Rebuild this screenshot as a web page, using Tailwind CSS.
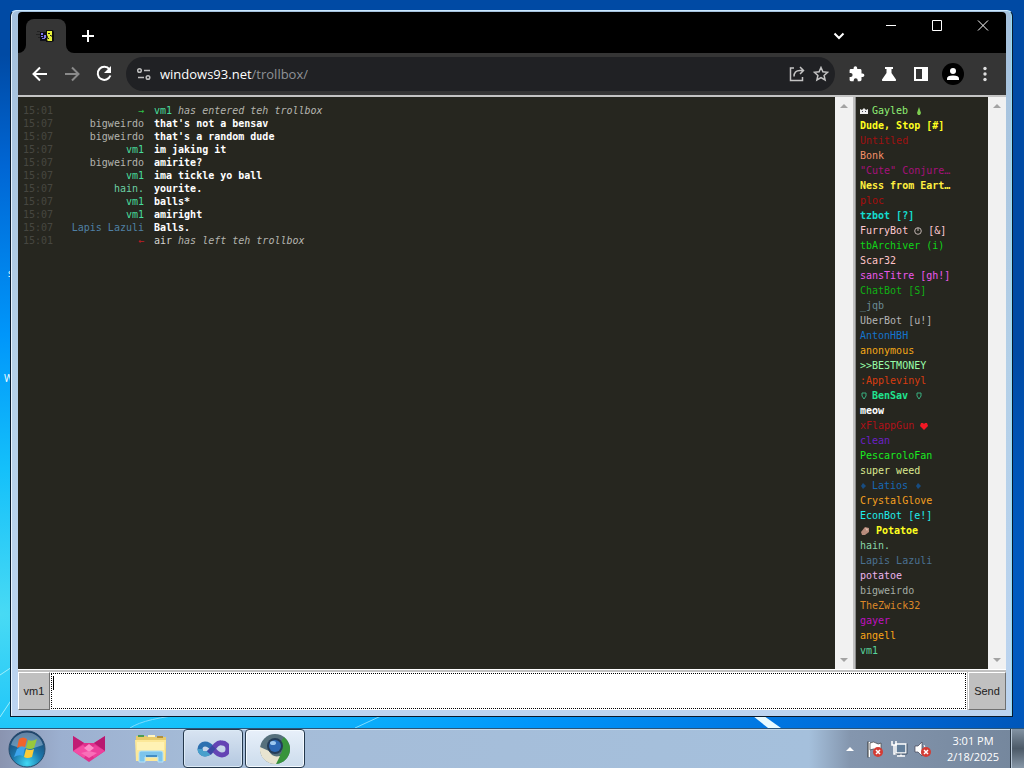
<!DOCTYPE html>
<html lang="en">
<head>
  <meta charset="UTF-8">
  <meta name="viewport" content="width=device-width, initial-scale=1">
  <title>Trollbox</title>
  <script src="https://cdn.jsdelivr.net/npm/@tailwindcss/browser@4"></script>
</head>
<body class="h-screen flex flex-col overflow-hidden font-['Open_Sans',sans-serif] bg-[radial-gradient(ellipse_1150px_560px_at_0_80%,#48daf4_0%,#14c0fa_26%,#0096fa_50%,#0066d4_80%,#004aa4_100%)]">

  <!-- Desktop -->
  <main class="relative flex-1 min-h-0 flex pt-[10px] pl-[10px] pr-[11px] pb-[11px]">
    <!-- Wallpaper light streaks -->
    <svg class="absolute bottom-0 left-0 w-full h-[100px]" viewBox="0 0 1024 100" preserveAspectRatio="none" aria-hidden="true">
      <path d="M0 47l12-8M0 89l12-18" stroke="#9deefb" stroke-width="1" fill="none"/>
      <path d="M130 100q15-10 60-14M355 100l26-12" stroke="#7fdcff" stroke-width="1" fill="none"/>
      <path d="M753 88h11l17 12h-13z" fill="#e8fbff"/>
    </svg>
    <!-- Desktop icon labels that stick out behind the window -->
    <span class="absolute left-[8px] top-[267px] text-[10px] leading-3 text-white">s</span>
    <span class="absolute left-[4px] top-[372px] text-[10px] leading-3 text-white">W</span>

    <!-- Browser window -->
    <section class="relative flex-1 min-w-0 flex flex-col rounded-t-md border border-[#0a1a2c] border-t-[#cdeaff] bg-linear-to-b from-[#a4c0dc] via-[#b4d0e8] to-[#bcd4f0] pt-px pl-[7px] pr-[6px] pb-[6px] shadow-[inset_1px_0_0_#e8f4ff,inset_-1px_0_0_#8fdcf4]">

      <!-- Tab strip -->
      <header class="h-[41px] shrink-0 bg-black flex items-end text-white rounded-t-sm">
        <div class="w-2 h-2 bg-[#353535]"><div class="h-full bg-black rounded-br-lg"></div></div>
        <div class="w-10 h-[34px] rounded-t-lg bg-[#353535] flex items-center justify-center">
          <svg class="w-5 h-4" viewBox="0 0 20 16" aria-label="windows93">
            <path d="M1 3h3v1H1zM0 6h4v1H0zM2 9h4v1H2z" fill="#222"/>
            <path d="M4 4h6v9H4z" fill="#101018"/>
            <path d="M5 5h2v2H5zM8 7h2v3H8zM6 10h3v1H6zM5 8h2v1H5z" fill="#7f78ee"/>
            <path d="M10 2h7l1 2v9l-2 1h-6z" fill="#101010"/>
            <path d="M11 3h5v4l-1 1 1 1v4h-4l-1-1 1-3-1-2z" fill="#e8f23a"/>
            <path d="M12 5h2v1h-2zM14 7h1v1h-1zM12 10h1v1h-1z" fill="#222"/>
          </svg>
        </div>
        <div class="w-2 h-2 bg-[#353535]"><div class="h-full bg-black rounded-bl-lg"></div></div>
        <button class="ml-[6px] mb-[9px] w-4 h-4" aria-label="New tab">
          <svg viewBox="0 0 16 16"><path d="M8 2v12M2 8h12" stroke="#fff" stroke-width="2"/></svg>
        </button>
        <div class="ml-auto self-stretch flex items-start">
          <button class="mt-[17px] mr-10 w-3 h-3" aria-label="Search tabs">
            <svg viewBox="0 0 12 12"><path d="M1.500 4.500L6 9l4.500-4.500" stroke="#fff" stroke-width="2" fill="none"/></svg>
          </button>
          <button class="mt-2 mr-[34px] w-3 h-3" aria-label="Minimize">
            <svg viewBox="0 0 12 12"><path d="M1 5.500h10" stroke="#fff"/></svg>
          </button>
          <button class="mt-2 mr-[34px] w-3 h-3" aria-label="Maximize">
            <svg viewBox="0 0 12 12"><path d="M1.500 .5h9v10h-9z" stroke="#fff" fill="none"/></svg>
          </button>
          <button class="mt-2 mr-[17px] w-3 h-3" aria-label="Close">
            <svg viewBox="0 0 12 12"><path d="M1 .5l10 10M11 .5l-10 10" stroke="#fff"/></svg>
          </button>
        </div>
      </header>

      <!-- Toolbar -->
      <nav class="h-[42px] shrink-0 bg-[#353535] flex items-center pl-3 pr-[13px] text-white">
        <button class="w-5 h-5" aria-label="Back">
          <svg viewBox="0 0 20 20"><path d="M17 10H4M10 3.500L3.500 10l6.500 6.500" stroke="#fff" stroke-width="2" fill="none"/></svg>
        </button>
        <button class="ml-3 w-5 h-5" aria-label="Forward">
          <svg viewBox="0 0 20 20"><path d="M3 10h13M10 3.500l6.500 6.500-6.500 6.500" stroke="#8a8a8a" stroke-width="2" fill="none"/></svg>
        </button>
        <button class="ml-3 w-5 h-5" aria-label="Reload">
          <svg viewBox="0 0 20 20"><path d="M15.500 5.500A6.500 6.500 0 1 0 16.400 11.500" stroke="#fff" stroke-width="2" fill="none"/><path d="M17 2v7h-7z" fill="#fff"/></svg>
        </button>
        <div class="ml-3 flex-1 min-w-0 h-[34px] rounded-full bg-[#202124] flex items-center pl-[10px] pr-[6px]">
          <svg class="w-4 h-4" viewBox="0 0 16 16" fill="none" stroke="#bdbdbd" stroke-width="1.500" aria-hidden="true">
            <circle cx="3.500" cy="4.500" r="1.800"/><path d="M8 4.500h6M2 11.500h6"/><circle cx="12" cy="11.500" r="1.800"/>
          </svg>
          <div class="ml-2 text-[13px] leading-5 text-[#8f9296] truncate"><span class="text-white">windows93.net</span>/trollbox/</div>
          <button class="ml-auto w-4 h-4" aria-label="Share">
            <svg viewBox="0 0 16 16" fill="none" stroke="#c4c4c4" stroke-width="1.500"><path d="M5 2H1.500v12.500h12V11"/><path d="M5 10.500q0-6 6-6h3M11 1l3.500 3.500L11 8"/></svg>
          </button>
          <button class="ml-2 w-4 h-4" aria-label="Bookmark">
            <svg viewBox="0 0 16 16" fill="none" stroke="#c4c4c4" stroke-width="1.500"><path d="M8 1.500l1.900 4.300 4.700.5-3.500 3.100 1 4.600L8 11.600 3.900 14l1-4.600L1.400 6.300l4.700-.5z"/></svg>
          </button>
        </div>
        <div class="ml-[14px] flex items-center gap-4">
          <button class="w-4 h-4" aria-label="Extensions">
            <svg viewBox="0 0 16 16" fill="#fff"><path d="M13.600 7.400h-1.100V4.400c0-.8-.7-1.400-1.500-1.400H8.200V2a1.800 1.800 0 0 0-3.600 0v1H2C1.200 3 .6 3.600.6 4.400v2.700h1a2 2 0 0 1 0 4h-1v2.700c0 .8.600 1.400 1.400 1.400h2.700v-1a2 2 0 0 1 4 0v1H11c.8 0 1.500-.6 1.500-1.400V11h1.100a1.800 1.800 0 0 0 0-3.600z"/></svg>
          </button>
          <button class="w-4 h-4" aria-label="Experiments">
            <svg viewBox="0 0 16 16" fill="#fff"><path d="M4 1h8v2h-1.500v4l4.500 6.500q.5 1.500-1 1.500H2q-1.500 0-1-1.500L5.500 7V3H4z"/></svg>
          </button>
          <button class="w-4 h-4" aria-label="Side panel">
            <svg viewBox="0 0 16 16"><path d="M1 1h14v14H1z" fill="#fff"/><path d="M3 3h6v10H3z" fill="#353535"/></svg>
          </button>
        </div>
        <button class="ml-[13px] w-[22px] h-[22px] rounded-full bg-black p-1" aria-label="Profile">
          <svg viewBox="0 0 14 14" fill="#fff"><circle cx="7" cy="4" r="3"/><path d="M1 13v-1.500Q1 8.500 7 8.500t6 3V13z"/></svg>
        </button>
        <button class="ml-[13px] w-4 h-4" aria-label="Menu">
          <svg viewBox="0 0 16 16" fill="#e0e0e0"><circle cx="8" cy="2.500" r="1.700"/><circle cx="8" cy="8" r="1.700"/><circle cx="8" cy="13.500" r="1.700"/></svg>
        </button>
      </nav>

      <!-- Chat -->
      <div class="flex-1 min-h-0 flex border-t-2 border-[#c4c4c4] bg-[#c0c0c0] gap-[2px] font-['DejaVu_Sans_Mono',monospace] text-[10px]">
        <div class="flex-1 min-w-0 flex bg-[#26261f]">
          <div class="flex-1 min-w-0 pt-[7px] pl-[5px]">
            <table class="leading-[13px] text-[#b4b4ae]">
              <tbody>
                <tr><td class="w-9 text-[#464640]">15:01</td><td class="w-[85px] text-right text-[#2fc84a]">→</td><td class="pl-[10px] italic"><span class="not-italic text-[#48dc9c]">vm1</span> has entered teh trollbox</td></tr>
                <tr><td class="text-[#464640]">15:07</td><td class="text-right">bigweirdo</td><td class="pl-[10px] font-bold text-white">that's not a bensav</td></tr>
                <tr><td class="text-[#464640]">15:07</td><td class="text-right">bigweirdo</td><td class="pl-[10px] font-bold text-white">that's a random dude</td></tr>
                <tr><td class="text-[#464640]">15:07</td><td class="text-right text-[#48dc9c]">vm1</td><td class="pl-[10px] font-bold text-white">im jaking it</td></tr>
                <tr><td class="text-[#464640]">15:07</td><td class="text-right">bigweirdo</td><td class="pl-[10px] font-bold text-white">amirite?</td></tr>
                <tr><td class="text-[#464640]">15:07</td><td class="text-right text-[#48dc9c]">vm1</td><td class="pl-[10px] font-bold text-white">ima tickle yo ball</td></tr>
                <tr><td class="text-[#464640]">15:07</td><td class="text-right text-[#6cd0a4]">hain.</td><td class="pl-[10px] font-bold text-white">yourite.</td></tr>
                <tr><td class="text-[#464640]">15:07</td><td class="text-right text-[#48dc9c]">vm1</td><td class="pl-[10px] font-bold text-white">balls*</td></tr>
                <tr><td class="text-[#464640]">15:07</td><td class="text-right text-[#48dc9c]">vm1</td><td class="pl-[10px] font-bold text-white">amiright</td></tr>
                <tr><td class="text-[#464640]">15:07</td><td class="text-right text-[#4f80a4]">Lapis Lazuli</td><td class="pl-[10px] font-bold text-white">Balls.</td></tr>
                <tr><td class="text-[#464640]">15:01</td><td class="text-right text-[#c01c24]">←</td><td class="pl-[10px] italic"><span class="not-italic text-[#d4d4d0]">air</span> has left teh trollbox</td></tr>
              </tbody>
            </table>
          </div>
          <div class="w-[18px] shrink-0 bg-[#f1f1f1] flex flex-col items-center justify-between py-[7px]">
            <svg class="w-2 h-1" viewBox="0 0 8 4"><path d="M4 0l4 4H0z" fill="#a3a3a3"/></svg>
            <svg class="w-2 h-1" viewBox="0 0 8 4"><path d="M0 0h8L4 4z" fill="#a3a3a3"/></svg>
          </div>
        </div>

        <!-- Users -->
        <aside class="w-[151px] shrink-0 flex bg-[#26261f] border-l border-[#8a8a8a]">
          <ul class="flex-1 min-w-0 pt-[6px] pl-1 leading-[15px] whitespace-nowrap">
            <li class="flex items-center text-[#90ee74]"><svg class="w-2 h-2 mr-1" viewBox="0 0 8 8"><path d="M0 2l2 1 2-2 2 2 2-1v5H0z" fill="#f0f0f0"/><path d="M2 4h1v1H2zM5 4h1v1H5z" fill="#445"/></svg>Gayleb<svg class="w-2 h-2 ml-[7px]" viewBox="0 0 8 8"><path d="M4 0l1 3 1 3-1 2H3L2 6l1-3z" fill="#7ccc50"/></svg></li>
            <li class="font-bold text-[#ffff20]">Dude, Stop [#]</li>
            <li class="text-[#a01010]">Untitled</li>
            <li class="text-[#f49068]">Bonk</li>
            <li class="text-[#a8107c]">"Cute" Conjure…</li>
            <li class="font-bold text-[#fff040]">Ness from Eart…</li>
            <li class="text-[#a80c0c]">ploc</li>
            <li class="font-bold text-[#14dcd0]">tzbot [?]</li>
            <li class="flex items-center text-[#ffc8d0]">FurryBot<svg class="w-2 h-2 mx-[6px]" viewBox="0 0 8 8" fill="none" stroke="#c0b4b0"><circle cx="4" cy="4" r="3.300"/><path d="M4 1v3"/></svg>[&amp;]</li>
            <li class="text-[#10d418]">tbArchiver (i)</li>
            <li class="text-[#ffc4c8]">Scar32</li>
            <li class="text-[#ec58ec]">sansTitre [gh!]</li>
            <li class="text-[#10b014]">ChatBot [S]</li>
            <li class="text-[#6c8c94]">_jqb</li>
            <li class="text-[#b4b4b4]">UberBot [u!]</li>
            <li class="text-[#1474cc]">AntonHBH</li>
            <li class="text-[#f4a818]">anonymous</li>
            <li class="text-[#98fca8]">&gt;&gt;BESTMONEY</li>
            <li class="text-[#d83c10]">:Applevinyl</li>
            <li class="flex items-center font-bold text-[#20e490]"><svg class="w-2 h-2 mr-1" viewBox="0 0 8 8" fill="none" stroke="#38b080"><path d="M2 1h4v3L4 7 2 4z"/></svg>BenSav<svg class="w-2 h-2 ml-[7px]" viewBox="0 0 8 8" fill="none" stroke="#38b080"><path d="M2 1h4v3L4 7 2 4z"/></svg></li>
            <li class="font-bold text-white">meow</li>
            <li class="flex items-center text-[#b01018]">xFlappGun<svg class="w-2 h-2 ml-[6px]" viewBox="0 0 8 8"><path d="M4 8L0 4l1-3h2l1 1 1-1h2l1 3z" fill="#f01824"/></svg></li>
            <li class="text-[#6c20c8]">clean</li>
            <li class="text-[#18ec20]">PescaroloFan</li>
            <li class="text-[#dce890]">super weed</li>
            <li class="flex items-center text-[#1868b4]"><svg class="w-2 h-2 mr-1" viewBox="0 0 8 8"><path d="M3 1l3 3-3 3-2-3z" fill="#184c80"/></svg>Latios<svg class="w-2 h-2 ml-[6px]" viewBox="0 0 8 8"><path d="M4 1l3 3-3 3-2-3z" fill="#184c80"/></svg></li>
            <li class="text-[#f4a020]">CrystalGlove</li>
            <li class="text-[#20ecec]">EconBot [e!]</li>
            <li class="flex items-center font-bold text-[#ffff20]"><svg class="w-[10px] h-[10px] mr-[6px]" viewBox="0 0 10 10"><path d="M1 6l4-5 4 1v4L5 9H2z" fill="#b88c7c"/><path d="M5 2l3 1-1 2z" fill="#e4c4b4"/></svg>Potatoe</li>
            <li class="text-[#88d4a8]">hain.</li>
            <li class="text-[#4a7090]">Lapis Lazuli</li>
            <li class="text-[#ecb4ec]">potatoe</li>
            <li class="text-[#a4aca4]">bigweirdo</li>
            <li class="text-[#dc8828]">TheZwick32</li>
            <li class="text-[#c010c0]">gayer</li>
            <li class="text-[#f8a418]">angell</li>
            <li class="text-[#58d49c]">vm1</li>
          </ul>
          <div class="w-[18px] shrink-0 bg-[#f1f1f1] flex flex-col items-center justify-between py-[7px]">
            <svg class="w-2 h-1" viewBox="0 0 8 4"><path d="M4 0l4 4H0z" fill="#a3a3a3"/></svg>
            <svg class="w-2 h-1" viewBox="0 0 8 4"><path d="M0 0h8L4 4z" fill="#a3a3a3"/></svg>
          </div>
        </aside>
      </div>

      <!-- Message form -->
      <form class="h-[41px] shrink-0 border-t border-white bg-[#c0c0c0] flex pt-[2px] font-['Liberation_Sans',sans-serif] text-[11px] text-[#202020]">
        <button type="button" class="w-8 shrink-0 bg-[#c0c0c0] border border-t-white border-l-white border-r-[#707070] border-b-[#707070]">vm1</button>
        <div class="relative flex-1 min-w-0 flex bg-white p-px">
          <textarea aria-label="Message" class="flex-1 min-w-0 resize-none bg-white border border-dotted border-black outline-none p-1"></textarea>
          <span class="absolute left-[3px] top-1 w-px h-[14px] bg-black"></span>
        </div>
        <button type="button" class="ml-px w-[38px] shrink-0 bg-[#c0c0c0] border border-t-white border-l-white border-r-[#707070] border-b-[#707070]">Send</button>
      </form>
    </section>
  </main>

  <!-- Taskbar -->
  <footer class="h-10 shrink-0 flex items-stretch border-t border-[#2a5478] shadow-[inset_0_1px_0_#c8dcec] bg-[linear-gradient(to_right,#8a94b0_0%,#9cb0d0_6%,#a5bcd8_20%,#a5c0dc_79%,#8496ae_83%,#74869c_100%)]">
    <button class="ml-2 w-[38px] flex items-center justify-center" aria-label="Start">
      <svg class="w-[38px] h-[38px]" viewBox="0 0 38 38">
        <defs><radialGradient id="orb" cx=".5" cy=".9" r=".9"><stop offset="0" stop-color="#40d8f4"/><stop offset=".45" stop-color="#1c78ac"/><stop offset="1" stop-color="#1c3c64"/></radialGradient></defs>
        <circle cx="19" cy="19" r="18" fill="url(#orb)" stroke="#284c6c"/>
        <path d="M3 15a16.500 16.500 0 0 1 32 0q-16 7-32 0z" fill="#cfe4f4" opacity=".4"/>
        <path d="M11 9q4-3 8 0l-2 8q-4-2-8 1z" fill="#f0642c"/>
        <path d="M20 10q4 2 9-1l-3 9q-4 2-8 0z" fill="#98c83c"/>
        <path d="M9 19q4-3 8-1l-2 8q-4-2-9 1z" fill="#3ca4ec"/>
        <path d="M18 19q4 2 8 0l-2 8q-5 2-8 0z" fill="#fccc38"/>
      </svg>
    </button>
    <button class="ml-[26px] w-[34px] flex items-center" aria-label="Fox">
      <svg class="w-[34px] h-7" viewBox="0 0 34 28">
        <path d="M1 1l11 7h10L33 1v15L17 27 1 16z" fill="#e0308c"/>
        <path d="M1 1l11 7-11 8z" fill="#c01c74"/><path d="M33 1l-11 7 11 8z" fill="#b81870"/>
        <path d="M1 16l10-6 6 6-5 7z" fill="#f44ca4"/><path d="M33 16l-10-6-6 6 5 7z" fill="#ec409c"/>
        <path d="M12 13l5-4 5 4-5 4z" fill="#fc8cc8"/><path d="M9 18l8-2 8 2-8 5z" fill="#f870b8"/>
      </svg>
    </button>
    <button class="ml-7 w-[34px] flex items-center" aria-label="File explorer">
      <svg class="w-[34px] h-[30px]" viewBox="0 0 34 30">
        <path d="M2 2h10l2 1h18v24H2z" fill="#e8cc6c"/>
        <path d="M4 1h6v2H4z" fill="#4c9c54"/><path d="M14 1h7v2h-7z" fill="#fff4c0"/><path d="M23 2h6v2h-6z" fill="#b09040"/>
        <path d="M1 6h31l-1 21H2z" fill="#fce898"/><path d="M3 8h27v8H3z" fill="#fff2b4"/>
        <path d="M5 28V19q0-2 2-2h20q2 0 2 2v9h-5v-5H11v5z" fill="#7cc4ec" stroke="#b8e4f8"/>
        <path d="M12 21h11v2H12z" fill="#428cc4"/>
      </svg>
    </button>
    <button class="ml-[15px] w-[60px] flex items-center justify-center rounded-sm border border-[#24384c] bg-linear-to-b from-[#d8e4f2] to-[#b4c8e0] shadow-[inset_0_0_0_1px_#dceaf6]" aria-label="Visual Studio">
      <svg class="w-8 h-5" viewBox="0 0 32 20" fill="none" stroke-width="5">
        <path d="M16 10Q12 15 8 15A5 5 0 0 1 8 5Q12 5 16 10" stroke="#2c70b0"/>
        <path d="M3 10a5 5 0 0 0 5 5q3 0 6-3" stroke="#48a0cc"/>
        <path d="M12 14l7-8q3-3 6-2a6 6 0 0 1 0 12q-4 0-8-5" stroke="#6444b4"/>
        <path d="M12 14l5-6" stroke="#3c48a4"/>
      </svg>
    </button>
    <button class="ml-[2px] w-[60px] flex items-center justify-center rounded-sm border border-[#24384c] bg-linear-to-b from-[#e8f0fa] to-[#ccdcec] shadow-[inset_0_0_0_1px_#f4faff]" aria-label="Browser">
      <svg class="w-8 h-8" viewBox="0 0 32 32">
        <circle cx="16" cy="16" r="15" fill="#56707c"/>
        <path d="M25 4a15 15 0 0 1-9 27l4-8q6-6 1-13z" fill="#38943c"/>
        <path d="M1 14a15 15 0 0 0 16 17l4-8q-8 2-11-5z" fill="#e8e4d0"/>
        <circle cx="16" cy="13" r="8" fill="#243c58"/><circle cx="16" cy="13" r="6" fill="#2c68b4"/>
        <ellipse cx="14" cy="10" rx="3" ry="2" fill="#9cc8f0"/>
      </svg>
    </button>

    <!-- Tray -->
    <div class="ml-auto flex items-center text-white">
      <svg class="w-2 h-1" viewBox="0 0 8 4" aria-hidden="true"><path d="M4 0l4 4H0z" fill="#fff"/></svg>
      <svg class="ml-3 w-[18px] h-[18px]" viewBox="0 0 18 18" aria-label="Action center">
        <path d="M3 2v15" stroke="#fff" stroke-width="2"/><path d="M2 1.500v16" stroke="#333"/>
        <path d="M4 3q4-2 6 0t5 0v8q-3 1-5-1t-6 0z" fill="#fff" stroke="#444" stroke-width=".7"/>
        <circle cx="12" cy="12" r="5" fill="#d43c34"/><path d="M10 10l4 4M14 10l-4 4" stroke="#fff" stroke-width="1.500"/>
      </svg>
      <svg class="ml-[6px] w-[18px] h-[18px]" viewBox="0 0 18 18" aria-label="Network">
        <path d="M6 4h10v9H6z" fill="#64809c" stroke="#fff" stroke-width="1.500"/><path d="M11 13v3M7 16h8" stroke="#fff" stroke-width="1.500"/>
        <path d="M2 1v4h4V1M4 5v9h3" stroke="#fff" fill="none" stroke-width="1.500"/><path d="M5.500 14h11.500V3.500" stroke="#26384a" fill="none" stroke-width=".7"/>
      </svg>
      <svg class="ml-[6px] w-[18px] h-[18px]" viewBox="0 0 18 18" aria-label="Volume muted">
        <path d="M1 6h3l4-4v14l-4-4H1z" fill="#fff" stroke="#445" stroke-width=".7"/><path d="M10 5q3 3 0 8" stroke="#fff" fill="none"/>
        <circle cx="12" cy="12" r="5" fill="#d43c34"/><path d="M10 10l4 4M14 10l-4 4" stroke="#fff" stroke-width="1.500"/>
      </svg>
      <div class="w-[74px] ml-1 text-center text-[11px] leading-4">
        <div>3:01 PM</div>
        <div>2/18/2025</div>
      </div>
      <button class="w-[14px] self-stretch border-l border-[#26323e] bg-linear-to-b from-[#8494a4] via-[#4c5a68] to-[#8898a8] shadow-[inset_1px_0_0_#b8c8d8]" aria-label="Show desktop"></button>
    </div>
  </footer>
</body>
</html>
